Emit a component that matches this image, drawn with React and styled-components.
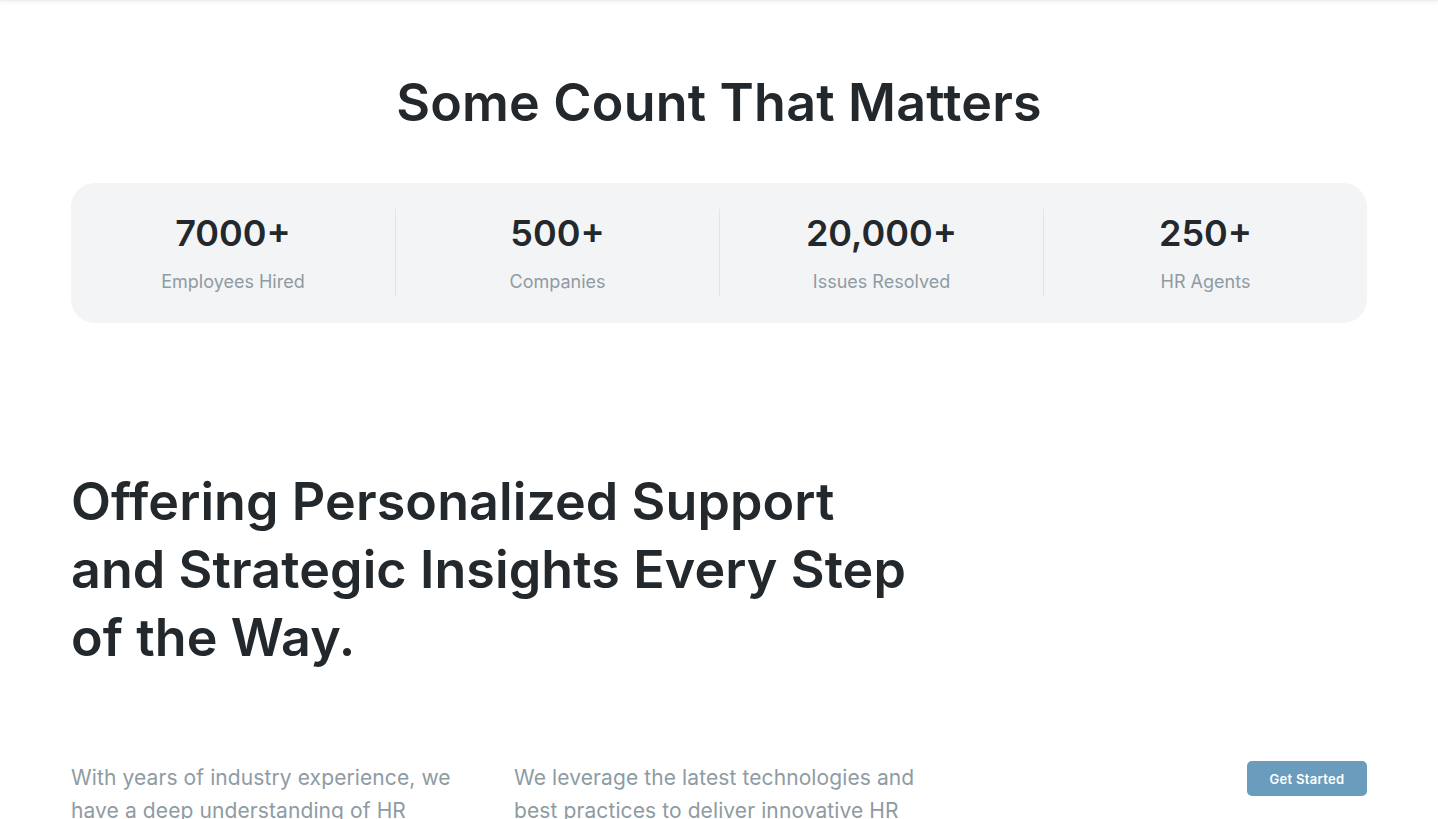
import React from "react";
import styled, { createGlobalStyle } from "styled-components";

const GlobalStyle = createGlobalStyle`
  html, body {
    margin: 0;
    padding: 0;
    background: #fff;
    font-family: Inter, "Noto Sans", sans-serif;
    color: #23282d;
  }
`;

const stats = [
  { value: "7000+", label: "Employees Hired" },
  { value: "500+", label: "Companies" },
  { value: "20,000+", label: "Issues Resolved" },
  { value: "250+", label: "HR Agents" },
];

function App() {
  return (
    <>
      <GlobalStyle />
      <TopShadow />
      <Page>
        <Title>Some Count That Matters</Title>
        <StatsCard>
          {stats.map((s, i) => (
            <Stat key={s.label} first={i === 0}>
              <Value>{s.value}</Value>
              <Label>{s.label}</Label>
            </Stat>
          ))}
        </StatsCard>

        <Heading>
          Offering Personalized Support and Strategic Insights Every Step of the
          Way.
        </Heading>

        <InfoRow>
          <Paragraph>
            With years of industry experience, we have a deep understanding of
            HR challenges and solutions.
          </Paragraph>
          <Paragraph>
            We leverage the latest technologies and best practices to deliver
            innovative HR solutions.
          </Paragraph>
          <ButtonCell>
            <Button>Get Started</Button>
          </ButtonCell>
        </InfoRow>
      </Page>
    </>
  );
}

const TopShadow = styled.div`
  height: 1px;
  background: #eee;
  box-shadow: 0 1px 3px rgba(0, 0, 0, 0.12);
`;

const Page = styled.main`
  width: 1296px;
  margin: 0 auto;
  padding-top: 70px;
`;

const Title = styled.h2`
  margin: 0;
  text-align: center;
  font-size: 52px;
  line-height: 64px;
  font-weight: 600;
  letter-spacing: 0.2px;
  color: #23282d;
`;

const StatsCard = styled.section`
  margin-top: 48px;
  display: grid;
  grid-template-columns: repeat(4, 1fr);
  background: #f3f4f6;
  border-radius: 24px;
  padding: 26px 0 27px;
`;

const Stat = styled.div`
  display: flex;
  flex-direction: column;
  align-items: center;
  border-left: ${({ first }) => (first ? "none" : "1px solid #e1e4e8")};
  padding: 2px 0 1px;
`;

const Value = styled.div`
  font-size: 36px;
  line-height: 44px;
  font-weight: 600;
  color: #23282d;
`;

const Label = styled.div`
  margin-top: 14px;
  font-size: 18px;
  line-height: 26px;
  color: #8e9ba3;
`;

const Heading = styled.h2`
  margin: 145px 0 0;
  width: 860px;
  font-size: 52px;
  line-height: 68px;
  font-weight: 600;
  letter-spacing: 0.1px;
  color: #23282d;
`;

const InfoRow = styled.section`
  margin-top: 89px;
  display: grid;
  grid-template-columns: 410px 410px 1fr;
  column-gap: 33px;
  align-items: start;
`;

const Paragraph = styled.p`
  margin: 0;
  font-size: 21px;
  line-height: 33px;
  letter-spacing: 0.1px;
  color: #8e9ba3;
`;

const ButtonCell = styled.div`
  display: flex;
  justify-content: flex-end;
`;

const Button = styled.button`
  width: 120px;
  height: 35px;
  border: none;
  border-radius: 5px;
  background: #6a9dbd;
  color: #fff;
  font-family: Inter, sans-serif;
  font-size: 13px;
  font-weight: 600;
  letter-spacing: 0.3px;
  cursor: pointer;
`;

export default App;
